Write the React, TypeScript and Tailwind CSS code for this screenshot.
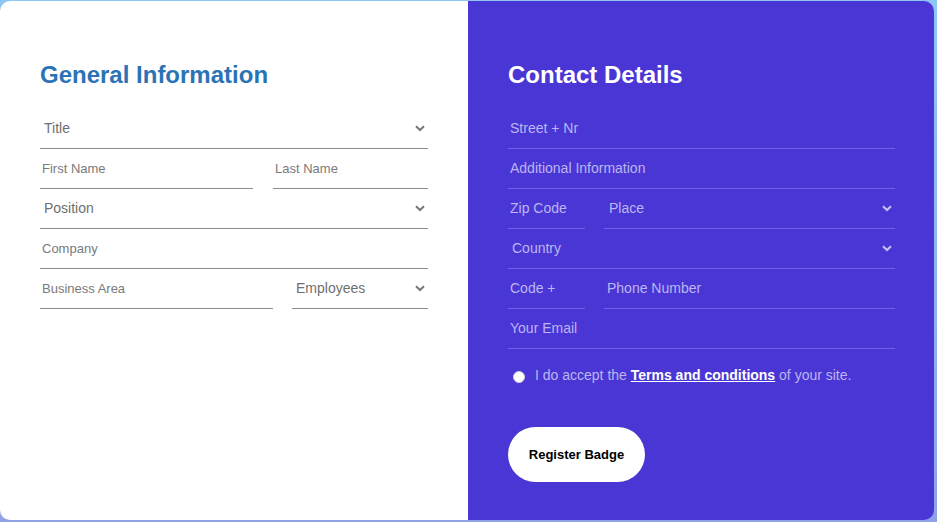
import React from "react";

const font = { fontFamily: '"Liberation Sans", Arial, sans-serif' };

function Chevron({ color }: { color: string }) {
  return (
    <svg width="10" height="7" viewBox="0 0 10 7" fill="none">
      <path d="M1 1.2 L5 5 L9 1.2" stroke={color} strokeWidth="2" />
    </svg>
  );
}

function LInput({ label, className = "", size = "text-[13px]" }: { label: string; className?: string; size?: string }) {
  return (
    <div className={`h-10 border-b border-[#8c8c8c] flex items-center pl-[2px] ${className}`}>
      <span className={`${size} text-[#7a7a7a]`}>{label}</span>
    </div>
  );
}

function LSelect({ label, className = "" }: { label: string; className?: string }) {
  return (
    <div className={`h-10 border-b border-[#8c8c8c] flex items-center justify-between pl-[4px] pr-[3px] ${className}`}>
      <span className="text-[14px] text-[#6f6f6f]">{label}</span>
      <Chevron color="#777777" />
    </div>
  );
}

function RInput({ label, className = "", pl = "pl-[2px]" }: { label: string; className?: string; pl?: string }) {
  return (
    <div className={`h-10 border-b border-[#6d62e3] flex items-center ${pl} ${className}`}>
      <span className="text-[14px] text-[#bcb5f2]">{label}</span>
    </div>
  );
}

function RSelect({ label, className = "", pl = "pl-[4px]" }: { label: string; className?: string; pl?: string }) {
  return (
    <div className={`h-10 border-b border-[#6d62e3] flex items-center justify-between ${pl} pr-[3px] ${className}`}>
      <span className="text-[14px] text-[#bcb5f2]">{label}</span>
      <Chevron color="#c9c3f5" />
    </div>
  );
}

export default function App() {
  return (
    <div
      className="w-[937px] h-[522px] bg-gradient-to-b from-[#8ec6f3] to-[#8fa2e6] pt-px"
      style={font}
    >
      <div className="w-[934px] h-[519px] rounded-[10px] overflow-hidden flex">
        <div className="w-[468px] h-full bg-white px-10 pt-[62px]">
          <h1 className="text-[24px] leading-[24px] font-bold text-[#2b73b6]">General Information</h1>
          <div className="mt-[22px] flex flex-col">
            <LSelect label="Title" />
            <div className="flex gap-5">
              <LInput label="First Name" className="w-[213px]" />
              <LInput label="Last Name" className="flex-1" />
            </div>
            <LSelect label="Position" />
            <LInput label="Company" />
            <div className="flex gap-[19px]">
              <LInput label="Business Area" className="w-[233px]" />
              <LSelect label="Employees" className="flex-1" />
            </div>
          </div>
        </div>
        <div className="w-[466px] h-full bg-[#4936d4] pl-10 pr-[39px] pt-[62px]">
          <h1 className="text-[24px] leading-[24px] font-bold text-white">Contact Details</h1>
          <div className="mt-[22px] flex flex-col">
            <RInput label="Street + Nr" />
            <RInput label="Additional Information" />
            <div className="flex gap-[19px]">
              <RInput label="Zip Code" className="w-[77px]" />
              <RSelect label="Place" className="flex-1" pl="pl-[5px]" />
            </div>
            <RSelect label="Country" />
            <div className="flex gap-[19px]">
              <RInput label="Code +" className="w-[77px]" />
              <RInput label="Phone Number" className="flex-1" pl="pl-[3px]" />
            </div>
            <RInput label="Your Email" />
          </div>
          <div className="mt-[17px] flex items-center pl-[5px] h-[19px]">
            <span className="w-[12px] h-[12px] rounded-full bg-white border border-[#cfcfe0] mt-[3px]" />
            <span className="ml-[10px] text-[14px] text-[#bcb5f2]">
              I do accept the{" "}
              <span className="font-bold text-white underline">Terms and conditions</span> of your site.
            </span>
          </div>
          <button className="block mt-[42px] w-[137px] h-[55px] rounded-full bg-white text-black text-[13px] font-bold">
            Register Badge
          </button>
        </div>
      </div>
    </div>
  );
}
